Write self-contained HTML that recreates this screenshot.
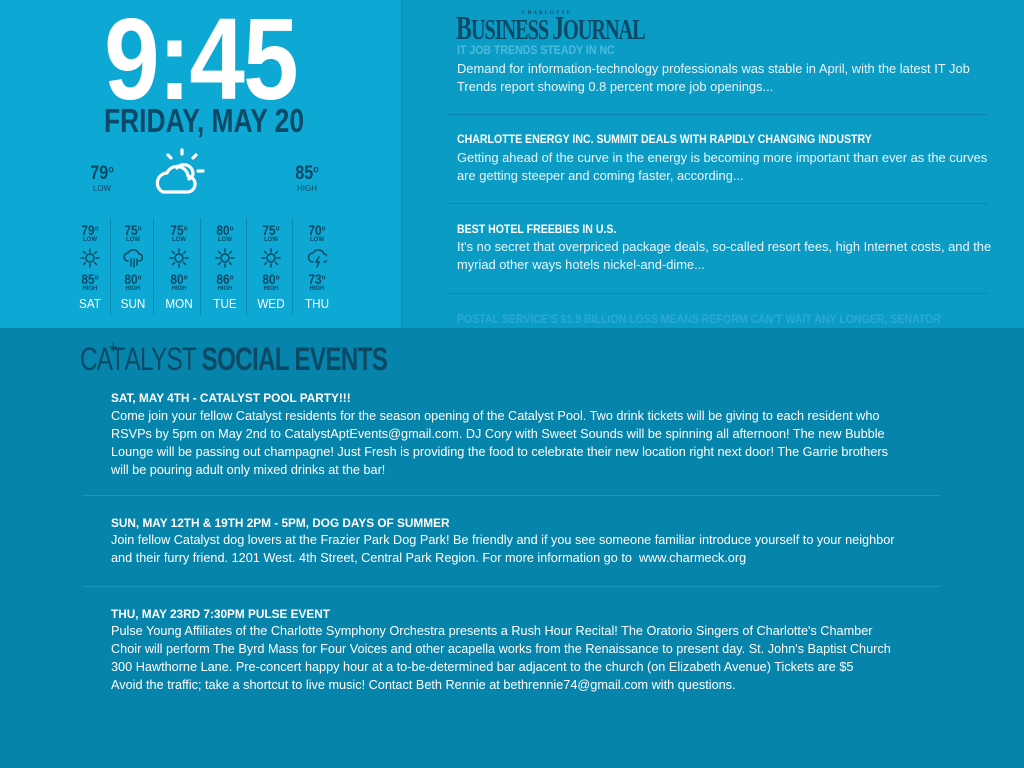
<!DOCTYPE html>
<html><head><meta charset="utf-8"><style>
*{margin:0;padding:0;box-sizing:border-box}
body{width:1024px;height:768px;overflow:hidden;background:#0784ab;font-family:"Liberation Sans",sans-serif;position:relative}
.a{position:absolute;white-space:nowrap}
#left{position:absolute;left:0;top:0;width:401px;height:328px;background:#0ea8d4}
#right{position:absolute;left:401px;top:0;width:623px;height:328px;background:#0b9cc6;border-left:2px solid #0a93bb}
.clock{left:0;width:401px;text-align:center;top:-8px;font-size:116px;font-weight:bold;color:#fff;transform:scaleX(.86);letter-spacing:-2px}
.date{left:0;width:408px;text-align:center;top:102px;font-size:33px;font-weight:bold;transform:scaleX(.8);color:#0b4a66}
.t{font-weight:bold;color:#0b4a66;text-align:center}
.col{position:absolute;top:218px;width:46px;height:97px;text-align:center;color:#0b4a66}
.col .lo{position:absolute;top:4px;left:0;width:100%;font-size:14px;font-weight:bold;transform:scaleX(.85)}
.col .l1{position:absolute;top:19px;left:0;width:100%;font-size:6px;font-weight:bold}
.col .ic{position:absolute;top:30px;left:13px}
.col .hi{position:absolute;top:53px;left:0;width:100%;font-size:14px;font-weight:bold;transform:scaleX(.85)}
.col .l2{position:absolute;top:68px;left:0;width:100%;font-size:6px;font-weight:bold}
.col .d{position:absolute;top:78px;left:0;width:100%;font-size:13px;color:#fff;transform:scaleX(.9)}
.sep{position:absolute;top:218px;width:1px;height:97px;background:#0a8bb3}
sup{font-size:.55em;vertical-align:.6em}
.nt{font-size:12px;font-weight:bold;color:#fff;transform:scaleX(.88);transform-origin:left}
.nd{font-size:12.9px;color:#eaf6fb;line-height:18px}
.hl{position:absolute;height:1px;background:#0a86ad}
.et{font-size:11.8px;font-weight:bold;color:#fff}
.ed{font-size:12.7px;color:#fff;line-height:18px}
</style></head><body>
<div id="left">
<div class="a clock">9:45</div>
<div class="a date">FRIDAY, MAY 20</div>
<div class="a t" style="left:84px;top:163px;width:36px;font-size:19px;transform:scaleX(.85)">79<sup>o</sup></div>
<div class="a" style="left:84px;top:184px;width:36px;text-align:center;font-size:8px;color:#0b4a66">LOW</div>
<div class="a t" style="left:289px;top:163px;width:36px;font-size:19px;transform:scaleX(.85)">85<sup>o</sup></div>
<div class="a" style="left:289px;top:184px;width:36px;text-align:center;font-size:8px;color:#0b4a66">HIGH</div>
<svg class="a" style="left:150px;top:146px" width="60" height="50" viewBox="0 0 60 50" fill="none" stroke="#fff" stroke-width="3.2" stroke-linecap="round" stroke-linejoin="round">
<path d="M32 4v4M18 9l3 3M46 9l-3 3M48 25h5"/>
<path d="M13 46h23a8 8 0 0 0 2-16a11 11 0 0 0-21-3a10 10 0 0 0-4 19z"/>
<path d="M27 22a9 9 0 0 1 16 6a7 7 0 0 1-4 5"/>
</svg>
</div>
<div id="right"></div>

<div class="sep" style="left:110px"></div><div class="sep" style="left:153px"></div><div class="sep" style="left:200px"></div><div class="sep" style="left:246px"></div><div class="sep" style="left:292px"></div>
<svg width="0" height="0" style="position:absolute"><defs>
<g id="sun" fill="none" stroke="#0b4a66" stroke-width="1.5" stroke-linecap="round"><circle cx="10" cy="10" r="4"/><path d="M10 1v3M10 16v3M1 10h3M16 10h3M3.5 3.5l2 2M14.5 14.5l2 2M3.5 16.5l2-2M14.5 5.5l2-2"/></g>
<g id="rain" fill="none" stroke="#0b4a66" stroke-width="1.5" stroke-linecap="round"><path d="M5 13a4 4 0 0 1 0-8a6 6 0 0 1 11 1a3.5 3.5 0 0 1 0 7"/><path d="M8 11v7M11 11v8M14 11v6"/></g>
<g id="storm" fill="none" stroke="#0b4a66" stroke-width="1.5" stroke-linecap="round"><path d="M6 14a4.5 4.5 0 0 1 0-9a6 6 0 0 1 11 1a4 4 0 0 1 0 8"/><path d="M12 9l-3 5h3l-2 5"/></g>
</defs></svg>
<div class="col" style="left:67px"><div class="lo">79<sup>o</sup></div><div class="l1">LOW</div><svg class="ic" width="20" height="20"><use href="#sun"/></svg><div class="hi">85<sup>o</sup></div><div class="l2">HIGH</div><div class="d">SAT</div></div>
<div class="col" style="left:110px"><div class="lo">75<sup>o</sup></div><div class="l1">LOW</div><svg class="ic" width="20" height="20"><use href="#rain"/></svg><div class="hi">80<sup>o</sup></div><div class="l2">HIGH</div><div class="d">SUN</div></div>
<div class="col" style="left:156px"><div class="lo">75<sup>o</sup></div><div class="l1">LOW</div><svg class="ic" width="20" height="20"><use href="#sun"/></svg><div class="hi">80<sup>o</sup></div><div class="l2">HIGH</div><div class="d">MON</div></div>
<div class="col" style="left:202px"><div class="lo">80<sup>o</sup></div><div class="l1">LOW</div><svg class="ic" width="20" height="20"><use href="#sun"/></svg><div class="hi">86<sup>o</sup></div><div class="l2">HIGH</div><div class="d">TUE</div></div>
<div class="col" style="left:248px"><div class="lo">75<sup>o</sup></div><div class="l1">LOW</div><svg class="ic" width="20" height="20"><use href="#sun"/></svg><div class="hi">80<sup>o</sup></div><div class="l2">HIGH</div><div class="d">WED</div></div>
<div class="col" style="left:294px"><div class="lo">70<sup>o</sup></div><div class="l1">LOW</div><svg class="ic" width="20" height="20"><use href="#storm"/></svg><div class="hi">73<sup>o</sup></div><div class="l2">HIGH</div><div class="d">THU</div></div>

<div class="a" style="left:522px;top:11px;font-family:'Liberation Serif',serif;font-size:5px;font-weight:bold;letter-spacing:2px;color:#0b4a66">CHARLOTTE</div>
<div class="a" style="left:456px;top:10px;font-family:'Liberation Serif',serif;font-size:29px;font-weight:bold;color:#0b4a66;transform:scaleX(.7);transform-origin:left;letter-spacing:-1.5px"><span style="font-size:34px">B</span>USINESS <span style="font-size:34px">J</span>OURNAL</div>
<div class="a nt" style="left:457px;top:43px;color:#5ec3e2;opacity:.8">IT JOB TRENDS STEADY IN NC</div>
<div class="a nd" style="left:457px;top:60px">Demand for information-technology professionals was stable in April, with the latest IT Job<br>Trends report showing 0.8 percent more job openings...</div>
<div class="hl" style="left:448px;top:114px;width:539px"></div>
<div class="a nt" style="left:457px;top:132px">CHARLOTTE ENERGY INC. SUMMIT DEALS WITH RAPIDLY CHANGING INDUSTRY</div>
<div class="a nd" style="left:457px;top:149px">Getting ahead of the curve in the energy is becoming more important than ever as the curves<br>are getting steeper and coming faster, according...</div>
<div class="hl" style="left:448px;top:203px;width:539px"></div>
<div class="a nt" style="left:457px;top:222px">BEST HOTEL FREEBIES IN U.S.</div>
<div class="a nd" style="left:457px;top:238px">It's no secret that overpriced package deals, so-called resort fees, high Internet costs, and the<br>myriad other ways hotels nickel-and-dime...</div>
<div class="hl" style="left:448px;top:293px;width:539px"></div>
<div class="a nt" style="left:457px;top:312px;color:#3fb3d8;opacity:.6;height:16px;width:590px;overflow:hidden">POSTAL SERVICE'S $1.9 BILLION LOSS MEANS REFORM CAN'T WAIT ANY LONGER, SENATOR</div>

<div class="a" style="left:80px;top:341px;font-size:32px;color:#0b4a66;transform:scaleX(.76);transform-origin:left;letter-spacing:-1px">CA<span style="position:relative">T<span style="position:absolute;left:-2px;top:-4px;font-size:20px">+</span></span>ALYST <b>SOCIAL EVENTS</b></div>
<div class="a et" style="left:111px;top:391px">SAT, MAY 4TH - CATALYST POOL PARTY!!!</div>
<div class="a ed" style="left:111px;top:407px">Come join your fellow Catalyst residents for the season opening of the Catalyst Pool. Two drink tickets will be giving to each resident who<br>RSVPs by 5pm on May 2nd to CatalystAptEvents@gmail.com. DJ Cory with Sweet Sounds will be spinning all afternoon! The new Bubble<br>Lounge will be passing out champagne! Just Fresh is providing the food to celebrate their new location right next door! The Garrie brothers<br>will be pouring adult only mixed drinks at the bar!</div>
<div class="hl" style="left:82px;top:495px;width:859px;background:#1a97bd"></div>
<div class="a et" style="left:111px;top:516px">SUN, MAY 12TH &amp; 19TH 2PM - 5PM, DOG DAYS OF SUMMER</div>
<div class="a ed" style="left:111px;top:531px">Join fellow Catalyst dog lovers at the Frazier Park Dog Park! Be friendly and if you see someone familiar introduce yourself to your neighbor<br>and their furry friend. 1201 West. 4th Street, Central Park Region. For more information go to &nbsp;www.charmeck.org</div>
<div class="hl" style="left:82px;top:586px;width:859px;background:#1a97bd"></div>
<div class="a et" style="left:111px;top:607px">THU, MAY 23RD 7:30PM PULSE EVENT</div>
<div class="a ed" style="left:111px;top:622px">Pulse Young Affiliates of the Charlotte Symphony Orchestra presents a Rush Hour Recital! The Oratorio Singers of Charlotte's Chamber<br>Choir will perform The Byrd Mass for Four Voices and other acapella works from the Renaissance to present day. St. John's Baptist Church<br>300 Hawthorne Lane. Pre-concert happy hour at a to-be-determined bar adjacent to the church (on Elizabeth Avenue) Tickets are $5<br>Avoid the traffic; take a shortcut to live music! Contact Beth Rennie at bethrennie74@gmail.com with questions.</div>
</body></html>
